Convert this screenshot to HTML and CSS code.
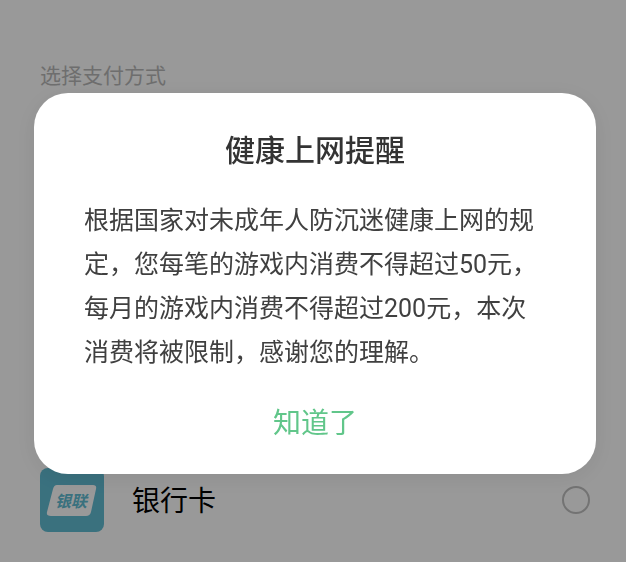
FILE: index.html
```html
<!DOCTYPE html>
<html lang="zh-CN">
<head>
<meta charset="UTF-8">
<meta name="viewport" content="width=device-width, initial-scale=1">
<title>选择支付方式</title>
<link rel="stylesheet" href="styles.css">
</head>

<body>
	<form class="payment">
		<h1 class="payment-title">选择支付方式</h1>
		<label class="method">
			<svg class="method-icon" viewBox="0 0 64 64" aria-hidden="true">
				<rect width="64" height="64" rx="8" fill="#61bcd3"/>
				<path d="M17 17H53Q57 17 56 21L51 44Q50 48 46 48H11Q6 48 7 44L13 21Q14 17 17 17Z" fill="#fff"/>
				<text class="method-logo" x="31" y="39" text-anchor="middle">银联</text>
			</svg>
			<span class="method-name">银行卡</span>
			<input class="method-radio" type="radio" name="method" value="card">
		</label>
	</form>

	<div class="mask">
		<div class="dialog" role="dialog" aria-modal="true" aria-labelledby="dialog-title">
			<h2 class="dialog-title" id="dialog-title">健康上网提醒</h2>
			<p class="dialog-text">根据国家对未成年人防沉迷健康上网的规定，您每笔的游戏内消费不得超过50元，每月的游戏内消费不得超过200元，本次消费将被限制，感谢您的理解。</p>
			<button class="dialog-button" type="button">知道了</button>
		</div>
	</div>
</body>
</html>
```
FILE: styles.css
```css
* {
	box-sizing: border-box;
}

body {
	margin: 0;
	background-color: #fff;
	font-family: Roboto, "Noto Sans CJK SC", sans-serif;
	color: #000;
}

.payment {
	display: flex;
	flex-direction: column;
	justify-content: space-between;
	min-height: 100vh;
	padding: 60px 36px 30px 40px;
}

.payment-title {
	margin: 0;
	font-size: 21px;
	line-height: 32px;
	font-weight: 400;
	color: #b8b8b8;
}

.method {
	display: flex;
	align-items: center;
}

.method-icon {
	width: 64px;
	height: 64px;
}

.method-logo {
	font-size: 16px;
	font-weight: 700;
	font-style: italic;
	fill: #61bcd3;
}

.method-name {
	flex: 1;
	margin-left: 28px;
	padding-top: 4px;
	font-size: 28px;
	line-height: 40px;
}

.method-radio {
	appearance: none;
	width: 28px;
	height: 28px;
	margin: 0;
	border: 2px solid #c0c0c0;
	border-radius: 50%;
}

.mask {
	position: fixed;
	inset: 0;
	display: flex;
	align-items: center;
	padding: 4px 30px 0 34px;
	background-color: rgba(0, 0, 0, 0.4);
}

.dialog {
	flex: 1;
	padding: 36px 50px 25px;
	border-radius: 34px;
	background-color: #fff;
	box-shadow: 0 4px 24px rgba(0, 0, 0, 0.08);
	text-align: center;
}

.dialog-title {
	margin: 0 0 26px;
	font-size: 30px;
	line-height: 44px;
	font-weight: 500;
	color: #333;
}

.dialog-text {
	margin: 0 0 24px;
	font-size: 25px;
	line-height: 44px;
	text-align: left;
	color: #404040;
}

.dialog-button {
	display: block;
	width: 100%;
	padding: 0;
	border: 0;
	background: none;
	font-family: inherit;
	font-size: 28px;
	line-height: 50px;
	color: #61c68a;
	cursor: pointer;
}
```
